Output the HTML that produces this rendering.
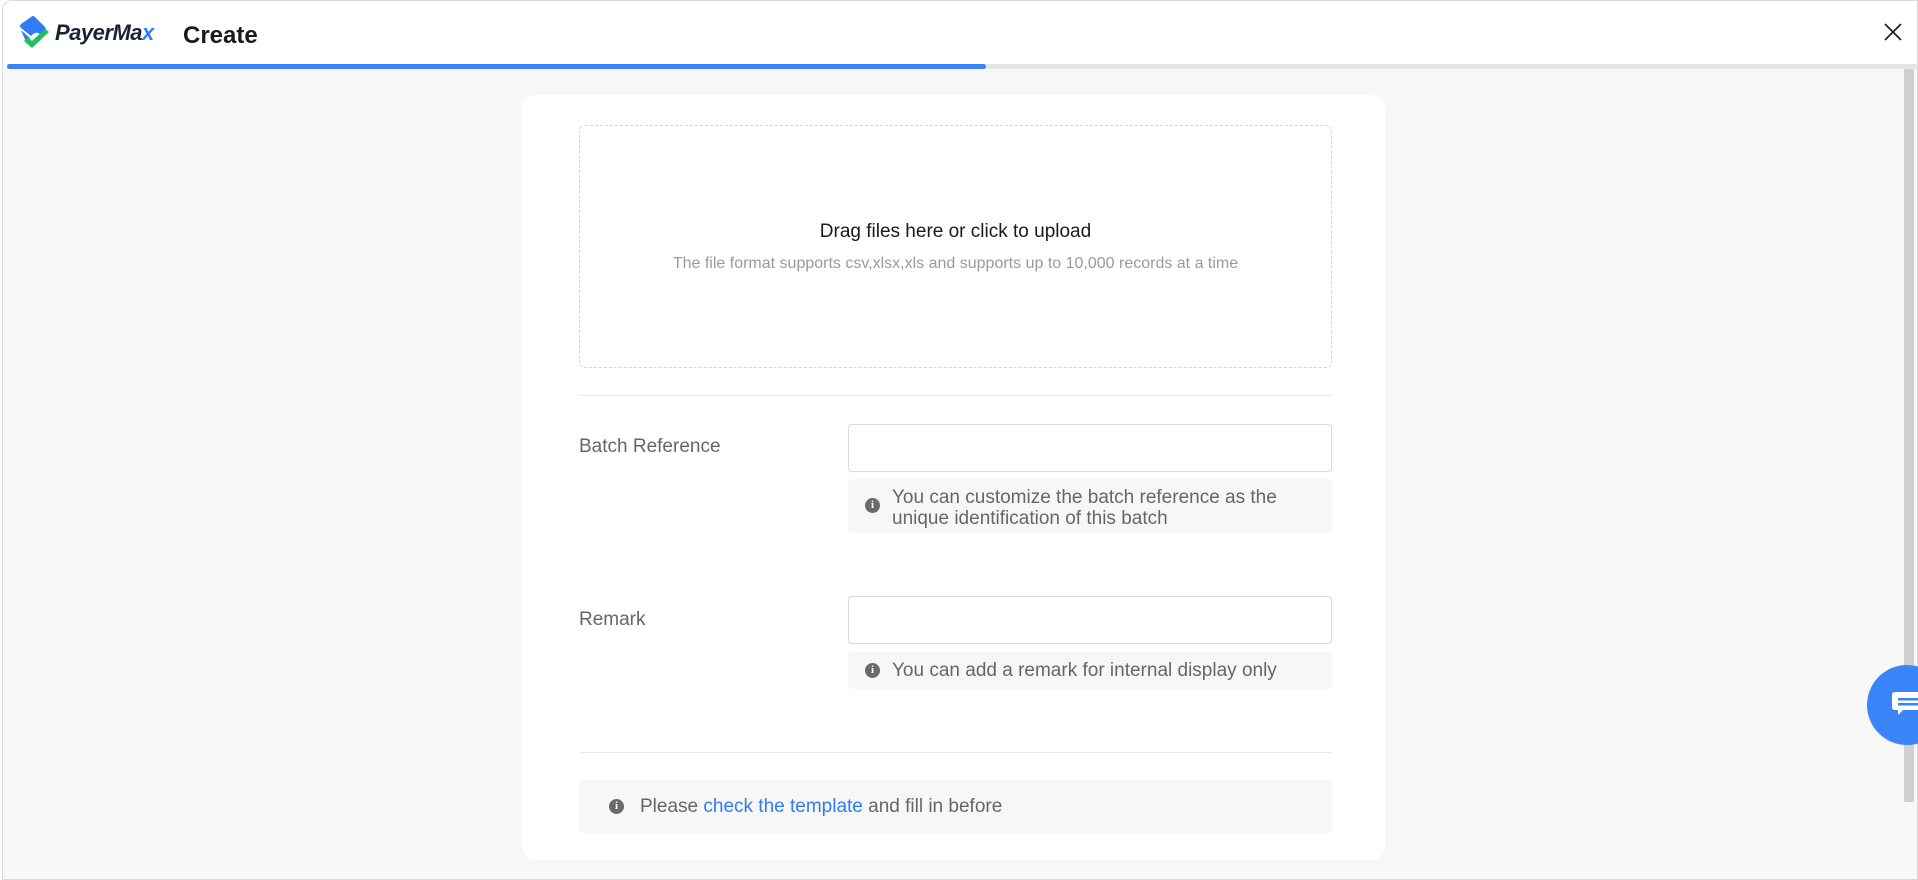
<!DOCTYPE html>
<html><head><meta charset="utf-8"><style>
*{box-sizing:border-box;margin:0;padding:0}
body{width:1918px;height:880px;overflow:hidden;background:#fff;font-family:"Liberation Sans",Arial,sans-serif;position:relative}
.win{position:absolute;left:2px;top:0;width:1916px;height:880px;border:1px solid #d8d8d8;border-radius:10px 0 0 0;background:#f8f8f8;overflow:hidden}
.hdr{position:absolute;left:0;top:0;width:100%;height:63px;background:#fff}
.track{position:absolute;left:4px;top:63px;width:1910px;height:5px;background:#e5e5e5}
.bar{position:absolute;left:4px;top:63px;width:979px;height:5px;background:#3a82f7;border-radius:3px}
.abs{position:absolute}
.card{position:absolute;left:522px;top:95px;width:863px;height:765px;background:#fff;border-radius:14px}
.up{position:absolute;left:579px;top:125px;width:753px;height:243px;border:1px dashed #d6d6d6;border-radius:6px;text-align:center}
.hr{position:absolute;left:579px;width:753px;height:1px;background:#e8e8e8}
.lbl{position:absolute;left:579px;font-size:19px;color:#666}
.inp{position:absolute;left:848px;width:484px;height:48px;border:1px solid #d9d9d9;border-radius:4px;background:#fff}
.hint{position:absolute;left:848px;width:484px;background:#f7f7f7;border-radius:4px;font-size:19px;color:#666;line-height:21px;padding:8px 40px 8px 44px}
.i{position:absolute;width:15px;height:15px;border-radius:50%;background:#6b6b6b;color:#fff;font:bold 11px/15px "Liberation Serif",serif;text-align:center}
</style></head><body>
<div class="win">
<div class="hdr">
<svg class="abs" style="left:14px;top:14px" width="34" height="36" viewBox="0 0 34 36">
<path d="M14 2 Q16 0 18 2 L28 12 Q30 14 28 16 L24 20 Q20 16 16 19 L14 21 L4 13 Q2 11 4 9 Z" fill="#2f7cf6"/>
<path d="M4 15 L13 23 L9 27 Z" fill="#2f7cf6"/>
<path d="M7 26 L15 33 L32 17 L28 14 L15 26 L11 22 Z" fill="#1fbf5a"/>
</svg>
<div class="abs" style="left:52px;top:19px;font:italic bold 22px 'Liberation Sans',sans-serif;color:#1b2236;letter-spacing:-0.5px">PayerMa<span style="color:#2f7cf6">x</span></div>
<div class="abs" style="left:180px;top:21px;font:bold 24px 'Liberation Sans',sans-serif;color:#1a1a1a">Create</div>
<svg class="abs" style="left:1880px;top:21px" width="20" height="20" viewBox="0 0 20 20"><path d="M2 2L18 18M18 2L2 18" stroke="#222" stroke-width="1.8"/></svg>
</div>
<div class="track"></div><div class="bar"></div>
<div class="abs" style="left:1901px;top:68px;width:10px;height:733px;background:#cfcfcf;border-radius:2px"></div>
</div>
<div class="card"></div>
<div class="up">
<div style="margin-top:95px;font-size:19px;color:#1a1a1a">Drag files here or click to upload</div>
<div style="margin-top:12px;font-size:16px;color:#9a9a9a">The file format supports csv,xlsx,xls and supports up to 10,000 records at a time</div>
</div>
<div class="hr" style="top:395px"></div>
<div class="lbl" style="top:436px">Batch Reference</div>
<div class="inp" style="top:424px"></div>
<div class="hint" style="top:479px;height:54px"><span class="i" style="left:17px;top:19px">i</span>You can customize the batch reference as the unique identification of this batch</div>
<div class="lbl" style="top:609px">Remark</div>
<div class="inp" style="top:596px"></div>
<div class="hint" style="top:652px;height:37px"><span class="i" style="left:17px;top:11px">i</span>You can add a remark for internal display only</div>
<div class="hr" style="top:752px"></div>
<div class="abs" style="left:579px;top:780px;width:753px;height:53px;background:#f7f7f7;border-radius:4px;font-size:19px;color:#666;padding:16px 0 0 61px"><span class="i" style="left:30px;top:19px">i</span>Please <span style="color:#2f7cf6">check the template</span> and fill in before</div>
<div class="abs" style="left:1867px;top:665px;width:80px;height:80px;border-radius:50%;background:#3a86f8"></div>
<svg class="abs" style="left:1891px;top:690px" width="27" height="30" viewBox="0 0 27 30"><path d="M4 2H27V20H12L7 25V20H4Q1 20 1 17V5Q1 2 4 2Z" fill="#fff"/><rect x="7" y="8" width="20" height="2.5" fill="#3a86f8"/><rect x="7" y="13" width="20" height="2.5" fill="#3a86f8"/></svg>
</body></html>
